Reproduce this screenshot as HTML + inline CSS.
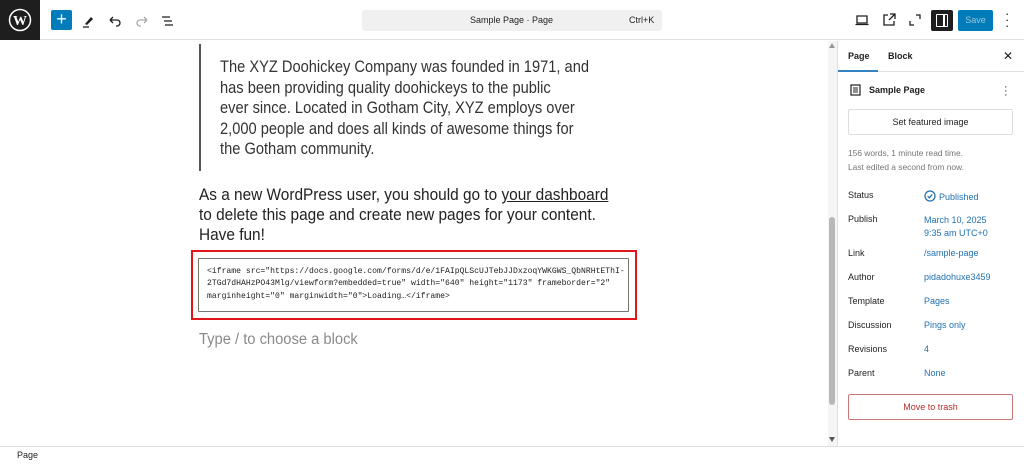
<!DOCTYPE html>
<html><head><meta charset="utf-8"><style>
*{margin:0;padding:0;box-sizing:border-box}
body{width:1024px;height:463px;overflow:hidden;background:#fff;font-family:"Liberation Sans",sans-serif;color:#1e1e1e;position:relative}
.abs{position:absolute}
.top{left:0;top:0;width:1024px;height:40px;border-bottom:1px solid #e0e0e0;background:#fff}
.logo{left:0;top:0;width:40px;height:40px;background:#1e1e1e}
.plus{left:51px;top:10px;width:21px;height:20px;background:#007cba;border-radius:2px;color:#fff;font-size:18px;line-height:19px;text-align:center}
.search{left:362px;top:10px;width:300px;height:21px;background:#f0f0f0;border-radius:3px;font-size:9px;color:#1e1e1e}
.save{left:958px;top:10px;width:35px;height:21px;background:#007cba;border-radius:2px;color:#9ec7e0;font-size:9px;text-align:center;line-height:21px}
.q{left:199px;top:44px;width:2px;height:127px;background:#555}
.qt{left:220px;top:57px;font-size:16.3px;line-height:20.5px;color:#333;white-space:nowrap;transform:scaleX(0.9);transform-origin:0 0}
.p{left:199px;top:185px;font-size:16.3px;line-height:20px;color:#222;white-space:nowrap;transform:scaleX(0.945);transform-origin:0 0}
.red{left:191px;top:250px;width:446px;height:70px;border:2px solid #e0161b}
.ta{left:198px;top:258px;width:431px;height:54px;border:1px solid #757575;border-radius:1px}
.code{left:207px;top:266px;font-family:"Liberation Mono",monospace;font-size:8.1px;line-height:12.3px;color:#1e1e1e;white-space:nowrap}
.ph{left:199px;top:331px;font-size:15.5px;color:#8a8a8a;transform:scaleX(0.95);transform-origin:0 0}
.sb{left:828px;top:41px;width:9px;height:405px;background:#f5f5f5}
.thumb{left:829px;top:217px;width:6px;height:188px;background:#b8b8b8;border-radius:3px}
.side{left:837px;top:41px;width:187px;height:405px;border-left:1px solid #e0e0e0;background:#fff}
.foot{left:0;top:446px;width:1024px;height:17px;border-top:1px solid #e0e0e0;font-size:9px;line-height:17px;padding-left:17px}
.s{font-size:9px;position:absolute}
.lbl{left:848px;color:#1e1e1e}
.val{left:924px;color:#2271b1}
.g{color:#757575;left:848px;font-size:8.4px}
</style></head><body>
<div class="abs top"></div>
<div class="abs logo"><svg width="40" height="40" viewBox="0 0 40 40"><circle cx="20" cy="20" r="10.5" fill="none" stroke="#fff" stroke-width="1.5"/><text x="20" y="25" fill="#fff" font-size="14" font-family="Liberation Serif" font-weight="bold" text-anchor="middle">W</text></svg></div>
<div class="abs plus">+</div>
<svg class="abs" style="left:80px;top:12px" width="18" height="18" viewBox="0 0 18 18"><path d="M5 12 L11 5 L13 7 L7 13Z" fill="#1e1e1e"/><path d="M3 15h6" stroke="#1e1e1e" stroke-width="1.3"/></svg>
<svg class="abs" style="left:106px;top:12px" width="18" height="18" viewBox="0 0 18 18"><path d="M4 8h7a3 3 0 0 1 0 6h-1M4 8l3-3M4 8l3 3" fill="none" stroke="#1e1e1e" stroke-width="1.3"/></svg>
<svg class="abs" style="left:133px;top:12px" width="18" height="18" viewBox="0 0 18 18"><path d="M14 8H7a3 3 0 0 0 0 6h1M14 8l-3-3M14 8l-3 3" fill="none" stroke="#aaa" stroke-width="1.3"/></svg>
<svg class="abs" style="left:159px;top:12px" width="18" height="18" viewBox="0 0 18 18"><path d="M3 5h8M5 9h8M6 13h8" stroke="#1e1e1e" stroke-width="1.3"/></svg>
<div class="abs search"><span class="abs" style="left:108px;top:5px">Sample Page · Page</span><span class="abs" style="left:267px;top:5px">Ctrl+K</span></div>
<svg class="abs" style="left:854px;top:12px" width="16" height="16" viewBox="0 0 16 16"><path d="M3 4h10v7H3zM1.5 12.5h13" fill="none" stroke="#1e1e1e" stroke-width="1.3"/></svg>
<svg class="abs" style="left:881px;top:12px" width="16" height="16" viewBox="0 0 16 16"><path d="M7 3H3v10h10V9M9 2h5v5M14 2L8 8" fill="none" stroke="#1e1e1e" stroke-width="1.3"/></svg>
<svg class="abs" style="left:907px;top:12px" width="16" height="16" viewBox="0 0 16 16"><path d="M9 3h4v4M7 13H3V9" fill="none" stroke="#1e1e1e" stroke-width="1.3"/></svg>
<div class="abs" style="left:931px;top:10px;width:22px;height:21px;background:#1e1e1e;border-radius:2px"><div class="abs" style="left:5px;top:4px;width:12px;height:13px;border:1.5px solid #fff;border-radius:1px"></div><div class="abs" style="left:12px;top:5px;width:1.5px;height:11px;background:#fff"></div></div>
<div class="abs save">Save</div>
<div class="abs" style="left:1005px;top:11px;font-size:13px;line-height:6px;color:#1e1e1e">·<br>·<br>·</div>

<div class="abs q"></div>
<div class="abs qt">The XYZ Doohickey Company was founded in 1971, and<br>has been providing quality doohickeys to the public<br>ever since. Located in Gotham City, XYZ employs over<br>2,000 people and does all kinds of awesome things for<br>the Gotham community.</div>
<div class="abs p">As a new WordPress user, you should go to <u>your dashboard</u><br>to delete this page and create new pages for your content.<br>Have fun!</div>
<div class="abs red"></div>
<div class="abs ta"></div>
<div class="abs code">&lt;iframe src="https://docs.google.com/forms/d/e/1FAIpQLScUJTebJJDxzoqYWKGWS_QbNRHtEThI-<br>2TGd7dHAHzPO43Mlg/viewform?embedded=true" width="640" height="1173" frameborder="2"<br>marginheight="0" marginwidth="0"&gt;Loading…&lt;/iframe&gt;</div>
<div class="abs ph">Type / to choose a block</div>

<div class="abs sb"></div><div class="abs thumb"></div>
<div class="abs" style="left:829px;top:43px;width:0;height:0;border-left:3px solid transparent;border-right:3px solid transparent;border-bottom:5px solid #999"></div>
<div class="abs" style="left:829px;top:437px;width:0;height:0;border-left:3px solid transparent;border-right:3px solid transparent;border-top:5px solid #555"></div>
<div class="abs side"></div>
<div class="s" style="left:848px;top:51px;font-weight:bold">Page</div>
<div class="s" style="left:888px;top:51px;font-weight:bold">Block</div>
<div class="s" style="left:1003px;top:49px;font-size:12px">✕</div>
<div class="abs" style="left:838px;top:71px;width:186px;height:1px;background:#e0e0e0"></div>
<div class="abs" style="left:838px;top:70px;width:40px;height:2px;background:#3582c4"></div>
<svg class="abs" style="left:850px;top:84px" width="11" height="12" viewBox="0 0 11 12"><rect x="1" y="1" width="9" height="10" fill="none" stroke="#1e1e1e" stroke-width="1.2"/><path d="M3 4h5M3 6h5M3 8h5" stroke="#1e1e1e"/></svg>
<div class="s" style="left:869px;top:85px;font-weight:bold">Sample Page</div>
<div class="abs" style="left:1004px;top:85px;font-size:11px;line-height:4px">·<br>·<br>·</div>
<div class="abs" style="left:848px;top:109px;width:165px;height:26px;border:1px solid #ddd;border-radius:2px;font-size:9px;text-align:center;line-height:25px">Set featured image</div>
<div class="s g" style="top:148px">156 words, 1 minute read time.</div>
<div class="s g" style="top:162px">Last edited a second from now.</div>
<div class="s lbl" style="top:190px">Status</div><div class="s val" style="top:190px"><svg width="12" height="12" viewBox="0 0 12 12" style="vertical-align:-2px;margin-right:3px"><circle cx="6" cy="6" r="5" fill="none" stroke="#2271b1" stroke-width="1.3"/><path d="M3.6 6.2l1.7 1.6 3-3.4" fill="none" stroke="#2271b1" stroke-width="1.3"/></svg>Published</div>
<div class="s lbl" style="top:214px">Publish</div><div class="s val" style="top:214px;line-height:13px">March 10, 2025<br>9:35 am UTC+0</div>
<div class="s lbl" style="top:248px">Link</div><div class="s val" style="top:248px">/sample-page</div>
<div class="s lbl" style="top:272px">Author</div><div class="s val" style="top:272px">pidadohuxe3459</div>
<div class="s lbl" style="top:296px">Template</div><div class="s val" style="top:296px">Pages</div>
<div class="s lbl" style="top:320px">Discussion</div><div class="s val" style="top:320px">Pings only</div>
<div class="s lbl" style="top:344px">Revisions</div><div class="s val" style="top:344px">4</div>
<div class="s lbl" style="top:368px">Parent</div><div class="s val" style="top:368px">None</div>
<div class="abs" style="left:848px;top:394px;width:165px;height:26px;border:1px solid #c77;border-radius:2px;font-size:9px;text-align:center;line-height:25px;color:#b32d2e">Move to trash</div>
<div class="abs foot">Page</div>
</body></html>
